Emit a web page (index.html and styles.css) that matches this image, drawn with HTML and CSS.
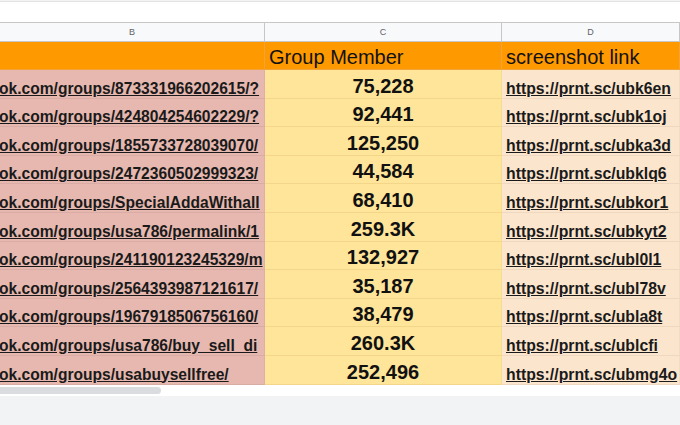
FILE: index.html
```html
<!DOCTYPE html>
<html>
<head>
<meta charset="utf-8">
<link rel="stylesheet" href="styles.css">
</head>
<body>
<div class="top"></div>
<div class="sheet">
  <div class="colhead">
    <div class="ch">B</div>
    <div class="ch">C</div>
    <div class="ch">D</div>
  </div>
  <div class="row head">
    <div class="cell b"></div>
    <div class="cell c htxt">Group Member</div>
    <div class="cell d htxt">screenshot link</div>
  </div>
  <div class="row"><div class="cell b"><span>ok.com/groups/873331966202615/?</span></div><div class="cell c num">75,228</div><div class="cell d"><span>https://prnt.sc/ubk6en</span></div></div>
  <div class="row"><div class="cell b"><span>ok.com/groups/424804254602229/?</span></div><div class="cell c num">92,441</div><div class="cell d"><span>https://prnt.sc/ubk1oj</span></div></div>
  <div class="row"><div class="cell b"><span>ok.com/groups/1855733728039070/</span></div><div class="cell c num">125,250</div><div class="cell d"><span>https://prnt.sc/ubka3d</span></div></div>
  <div class="row"><div class="cell b"><span>ok.com/groups/2472360502999323/</span></div><div class="cell c num">44,584</div><div class="cell d"><span>https://prnt.sc/ubklq6</span></div></div>
  <div class="row"><div class="cell b"><span>ok.com/groups/SpecialAddaWithall</span></div><div class="cell c num">68,410</div><div class="cell d"><span>https://prnt.sc/ubkor1</span></div></div>
  <div class="row"><div class="cell b"><span>ok.com/groups/usa786/permalink/1</span></div><div class="cell c num">259.3K</div><div class="cell d"><span>https://prnt.sc/ubkyt2</span></div></div>
  <div class="row"><div class="cell b"><span>ok.com/groups/241190123245329/m</span></div><div class="cell c num">132,927</div><div class="cell d"><span>https://prnt.sc/ubl0l1</span></div></div>
  <div class="row"><div class="cell b"><span>ok.com/groups/2564393987121617/</span></div><div class="cell c num">35,187</div><div class="cell d"><span>https://prnt.sc/ubl78v</span></div></div>
  <div class="row"><div class="cell b"><span>ok.com/groups/1967918506756160/</span></div><div class="cell c num">38,479</div><div class="cell d"><span>https://prnt.sc/ubla8t</span></div></div>
  <div class="row"><div class="cell b"><span>ok.com/groups/usa786/buy_sell_di</span></div><div class="cell c num">260.3K</div><div class="cell d"><span>https://prnt.sc/ublcfi</span></div></div>
  <div class="row"><div class="cell b"><span>ok.com/groups/usabuysellfree/</span></div><div class="cell c num">252,496</div><div class="cell d"><span>https://prnt.sc/ubmg4o</span></div></div>
  <div class="scroll"><div class="thumb"></div></div>
</div>
<div class="foot"></div>
</body>
</html>
```
FILE: styles.css
```css
html, body {
  margin: 0;
  padding: 0;
  background: #f1f3f4;
  font-family: "Liberation Sans", Arial, sans-serif;
  width: 680px;
  height: 425px;
  overflow: hidden;
}
.top {
  height: 21px;
  background: #fff;
  border-top: 1px solid #e3e3e3;
  margin-top: 1px;
  box-sizing: border-box;
}
.sheet {
  background: #fff;
}
.colhead {
  display: grid;
  grid-template-columns: 265px 237px 178px;
  height: 20px;
  background: #f8f9fa;
  border-top: 1px solid #c7c7c7;
  border-bottom: 1px solid #c7c7c7;
  box-sizing: border-box;
}
.ch {
  border-right: 1px solid #c7c7c7;
  font-size: 9px;
  color: #5f6368;
  display: flex;
  align-items: center;
  justify-content: center;
}
.row {
  display: grid;
  grid-template-columns: 265px 237px 178px;
  height: 28.6px;
}
.row.head {
  height: 28px;
  background: #ff9900;
}
.cell {
  overflow: hidden;
  white-space: nowrap;
  box-sizing: border-box;
  border-bottom: 1px solid rgba(0,0,0,0.05);
  border-right: 1px solid rgba(0,0,0,0.04);
  display: flex;
  align-items: flex-end;
  color: #000;
}
.head .cell {
  background: #ff9900;
  border-bottom: 1px solid #f2a33a;
  border-right: 1px solid #f2a33a;
}
.htxt {
  font-size: 20px;
  padding-left: 4px;
  color: #111;
}
.b { background: #e6b8af; }
.c { background: #ffe599; border-bottom-color: #f3d68a; }
.d { background: #fce5cd; }
.b span {
  font-weight: bold;
  font-size: 15.6px;
  text-decoration: underline;
  margin-left: -1px;
  color: #1a1a1a;
}
.d span {
  font-weight: bold;
  font-size: 15.8px;
  text-decoration: underline;
  padding-left: 4px;
  color: #1a1a1a;
}
.num {
  justify-content: center;
  font-weight: bold;
  font-size: 20px;
  color: #111;
}
.scroll {
  height: 11px;
  background: #fff;
  padding-top: 2px;
  box-sizing: border-box;
}
.thumb {
  width: 161px;
  height: 7px;
  background: #dadce0;
  border-radius: 0 4px 4px 0;
}
.foot {
  height: 30px;
  background: #f1f3f4;
}
```
